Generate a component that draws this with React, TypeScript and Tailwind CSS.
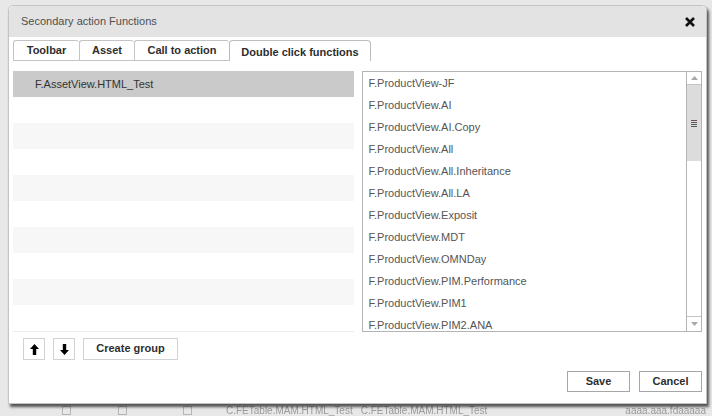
import React from 'react';

const tabs = ['Toolbar', 'Asset', 'Call to action', 'Double click functions'];

const functions = [
  'F.ProductView-JF',
  'F.ProductView.AI',
  'F.ProductView.AI.Copy',
  'F.ProductView.All',
  'F.ProductView.All.Inheritance',
  'F.ProductView.All.LA',
  'F.ProductView.Exposit',
  'F.ProductView.MDT',
  'F.ProductView.OMNDay',
  'F.ProductView.PIM.Performance',
  'F.ProductView.PIM1',
  'F.ProductView.PIM2.ANA',
];

const ArrowIcon = ({ down }: { down?: boolean }) => (
  <svg width="9" height="11" viewBox="0 0 9 11" className={down ? 'rotate-180' : ''}>
    <path d="M4.5 0 L9 5 H6.2 V11 H2.8 V5 H0 Z" fill="#000" />
  </svg>
);

const App: React.FC = () => {
  const rows = Array.from({ length: 10 }, (_, i) => i);

  return (
    <div className="relative w-[712px] h-[416px] overflow-hidden bg-[#e8e8e8] font-['Liberation_Sans',Arial,sans-serif]">
      {/* page under the modal */}
      <div className="flex h-full flex-col justify-end">
        <div className="flex h-[11px] items-center text-[10px] text-[#9a9a9a] blur-[0.4px]">
          <span className="ml-[62px] h-[9px] w-[9px] border border-[#b5b5b5]" />
          <span className="ml-[47px] h-[9px] w-[9px] border border-[#b5b5b5]" />
          <span className="ml-[56px] h-[9px] w-[9px] border border-[#b5b5b5]" />
          <span className="ml-[34px]">C.FETable.MAM.HTML_Test</span>
          <span className="ml-[8px]">C.FETable.MAM.HTML_Test</span>
          <span className="ml-auto mr-[6px]">aaaa.aaa.fdaaaaa</span>
        </div>
      </div>

      {/* modal */}
      <div className="absolute left-[8px] top-[5px] flex h-[399px] w-[699px] flex-col rounded-t-[5px] border border-[#c4c4c4] bg-white shadow-[2px_3px_3px_rgba(0,0,0,0.65)]">
        <div className="flex h-[31px] items-center justify-between rounded-t-[5px] bg-[#e3e3e3] pl-[12px] pr-[11px]">
          <span className="text-[11px] text-[#4f4f4f]">Secondary action Functions</span>
          <svg width="10" height="10" viewBox="0 0 10 10">
            <path d="M1 1 L9 9 M9 1 L1 9" stroke="#111" strokeWidth="2.6" />
          </svg>
        </div>

        <div className="flex flex-col px-[4px] pt-[3px]">
          {/* tabs */}
          <div className="flex h-[21px] items-stretch text-[11px] font-bold text-[#2e2e2e]">
            {tabs.map((t, i) => {
              const active = i === tabs.length - 1;
              const widths = ['w-[66px]', 'w-[55px]', 'w-[95px]', 'w-[142px]'];
              return (
                <div
                  key={t}
                  className={
                    active
                      ? `${widths[i]} flex items-center justify-center rounded-t-[4px] border border-b-0 border-[#bcbcbc] pt-[2px]`
                      : `${widths[i]} flex items-center justify-center rounded-t-[3px] border border-r-0 border-[#c4c4c4] pb-[1px]`
                  }
                >
                  {t}
                </div>
              );
            })}
          </div>

          <div className="mt-[10px] flex gap-[8px]">
            {/* left list */}
            <div className="flex w-[341px] flex-col">
              {rows.map((i) => (
                <div
                  key={i}
                  className={`flex h-[26px] items-center pl-[22px] text-[11px] text-[#333] ${
                    i === 0 ? 'bg-[#cacaca]' : i % 2 === 0 ? 'bg-[#f7f7f7]' : 'bg-white'
                  }`}
                >
                  {i === 0 ? 'F.AssetView.HTML_Test' : ''}
                </div>
              ))}
              <div className="h-px bg-[#ededed]" />
              <div className="mt-[6px] flex gap-[8px] pl-[10px]">
                <button className="flex h-[22px] w-[22px] items-center justify-center border border-[#d2d2d2] bg-white">
                  <ArrowIcon />
                </button>
                <button className="flex h-[22px] w-[22px] items-center justify-center border border-[#d2d2d2] bg-white">
                  <ArrowIcon down />
                </button>
                <button className="h-[22px] w-[95px] border border-[#d2d2d2] bg-white pb-[2px] text-[11px] font-bold text-[#2e2e2e]">
                  Create group
                </button>
              </div>
            </div>

            {/* right list */}
            <div className="flex h-[261px] w-[341px] border border-[#b4b4b4]">
              <div className="flex flex-1 flex-col overflow-hidden">
                {functions.map((f) => (
                  <div key={f} className="flex h-[22px] shrink-0 items-center pl-[6px] text-[11px] text-[#555]">
                    {f}
                  </div>
                ))}
              </div>
              <div className="flex w-[15px] flex-col border-l border-[#b4b4b4]">
                <div className="flex h-[13px] items-center justify-center border-b border-[#c4c4c4] bg-white">
                  <svg width="7" height="4" viewBox="0 0 7 4">
                    <path d="M0 4 L3.5 0 L7 4 Z" fill="#a8a8a8" />
                  </svg>
                </div>
                <div className="flex h-[76px] flex-col items-center justify-center gap-[1px] bg-[#dcdcdc]">
                  <span className="h-px w-[6px] bg-[#7a4c58]" />
                  <span className="h-px w-[6px] bg-[#555a60]" />
                  <span className="h-px w-[6px] bg-[#555a60]" />
                  <span className="h-px w-[6px] bg-[#555a60]" />
                </div>
                <div className="flex-1 bg-white" />
                <div className="flex h-[15px] items-center justify-center border-t border-[#c4c4c4] bg-white">
                  <svg width="7" height="4" viewBox="0 0 7 4">
                    <path d="M0 0 L7 0 L3.5 4 Z" fill="#a8a8a8" />
                  </svg>
                </div>
              </div>
            </div>
          </div>

          {/* footer */}
          <div className="mt-[11px] flex justify-end gap-[9px]">
            <button className="h-[21px] w-[63px] border border-[#a6a6a6] bg-white pb-[1px] text-[11px] font-bold text-[#2e2e2e]">
              Save
            </button>
            <button className="h-[21px] w-[63px] border border-[#a6a6a6] bg-white pb-[1px] text-[11px] font-bold text-[#2e2e2e]">
              Cancel
            </button>
          </div>
        </div>
      </div>
    </div>
  );
};

export default App;
